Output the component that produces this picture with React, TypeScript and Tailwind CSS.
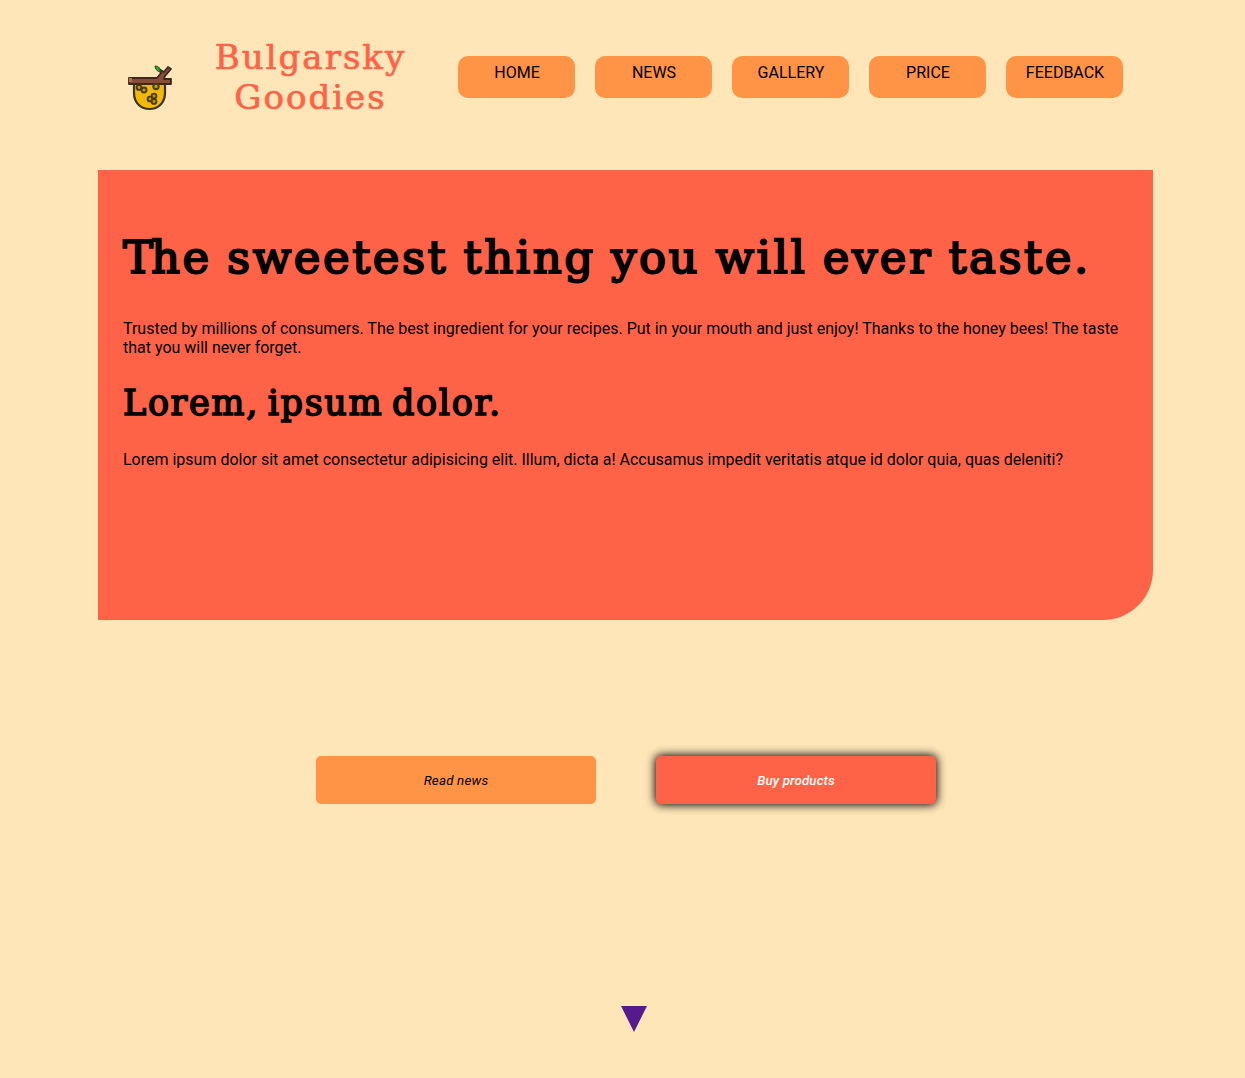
const links = ['HOME', 'NEWS', 'GALLERY', 'PRICE', 'FEEDBACK'];

function HiveLogo() {
  return (
    <svg className="h-[48px] w-[48px] shrink-0" viewBox="0 0 48 48">
      <path d="M8 15h31v14c0 10-7 16-15.500 16S8 39 8 29z" fill="#f2b90a" stroke="#3a3420" strokeWidth="2.2" />
      <path d="M31 14l4-5-2-4 5 3 4-5 3 2-6 7-1 3h7v5H3v-6h28z" fill="#874d38" stroke="#3d2821" strokeWidth="1.8" strokeLinejoin="round" />
      <path d="M29 2c4 0 6 3 5 6-3-1-5-3-5-6z" fill="#20a52b" stroke="#24501f" />
      <rect x="3" y="14" width="3" height="4" fill="#b56f3d" />
      <g fill="#c99a0a" stroke="#493c10" strokeWidth="1.9">
        <circle cx="13" cy="23.500" r="2.400" />
        <circle cx="18" cy="26" r="2.500" />
        <circle cx="30" cy="22.500" r="2.700" />
        <circle cx="28" cy="32" r="2.400" />
        <circle cx="24" cy="35" r="2.400" />
        <circle cx="28" cy="37.500" r="2.400" />
      </g>
    </svg>
  );
}

export default function App() {
  return (
    <div className="h-[1078px] overflow-hidden bg-[#ffe6b8] px-[98px] font-['Roboto',sans-serif] text-base leading-[19px] text-black">
      <header className="flex h-[170px] w-[1055px] items-start pl-[28px] pt-[35px]">
        <div className="pt-[29px]"><HiveLogo /></div>
        <div className="ml-[27px] mt-[2px] w-[219px] whitespace-nowrap text-center font-['DejaVu_Serif',serif] text-[34px] leading-[40px] tracking-[2px] text-[#ff6347] [-webkit-text-stroke:0.7px_#ff6347]">
          Bulgarsky
          <br />
          Goodies
        </div>
        <nav className="ml-[38px] mt-[21px] flex gap-[20px]">
          {links.map((l) => (
            <a key={l} className="h-[42px] w-[117px] rounded-[10px] bg-[#ff9346] pl-px pt-[7px] text-center" href="#">{l}</a>
          ))}
        </nav>
      </header>
      <main className="h-[450px] w-[1055px] rounded-br-[50px] bg-[#ff6347] px-[25px] pt-[56px]">
        <h1 className="h-[64px] whitespace-nowrap font-['DejaVu_Serif',serif] text-[45px] leading-[64px] tracking-[2.55px] [word-spacing:-1.500px] [-webkit-text-stroke:2px_black]">
          <span className="tracking-[-2px]">T</span>he sweetest thing you will ever taste.
        </h1>
        <p className="mt-[29px] tracking-[-0.005px]">
          Trusted by millions of consumers. The best ingredient for your recipes. Put in your mouth and just enjoy! Thanks to the honey bees! The taste that you will never forget.
        </p>
        <h2 className="-mt-[1px] h-[72px] whitespace-nowrap pt-[23px] font-['DejaVu_Serif',serif] text-[35px] leading-[48px] tracking-[1.65px] [word-spacing:-4px] [-webkit-text-stroke:1.6px_black]">
          Lorem, ipsum dolor.
        </h2>
        <p className="mt-[22px] tracking-[-0.005px]">
          Lorem ipsum dolor sit amet consectetur adipisicing elit. Illum, dicta a! Accusamus impedit veritatis atque id dolor quia, quas deleniti?
        </p>
      </main>
      <div className="ml-[218px] mt-[136px] flex gap-[60px] text-[13.333px] italic">
        <button className="h-[48px] w-[280px] rounded-[5px] bg-[#ff9346] tracking-[0.2px]">Read news</button>
        <button className="h-[48px] w-[280px] rounded-[5px] bg-[#ff6347] font-medium tracking-[0.1px] text-white shadow-[0_0_10px_1px_#000]">Buy products</button>
      </div>
      <svg className="ml-[523px] mt-[202px] h-[26px] w-[26px]" viewBox="0 0 26 26">
        <path d="M0 0h26L13 26z" fill="#551a8b" />
      </svg>
    </div>
  );
}
